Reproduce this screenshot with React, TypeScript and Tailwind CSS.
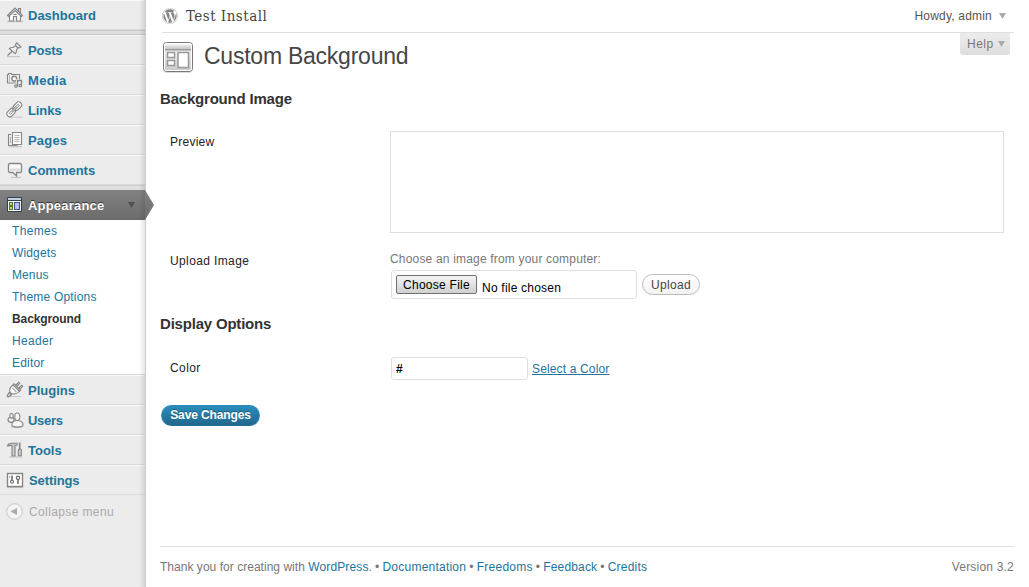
import type { ReactNode } from 'react';
import { FaWordpress } from 'react-icons/fa';

const stroke = { fill: 'none', stroke: '#858585', strokeWidth: 1.1 } as const;

function Icon({ children }: { children: ReactNode }) {
  return (
    <svg width="18" height="18" viewBox="0 0 18 18" className="shrink-0" {...stroke}>
      {children}
    </svg>
  );
}

const HomeIcon = () => (
  <Icon>
    <path d="M1 15.6h16" stroke="#c4c4c4" />
    <path d="M3.500 8.500V15h4v-4.500h3V15h4V8.500" fill="#f8f8f8" />
    <path d="M12.500 5V2.500h2V7" fill="#ddd" />
    <path d="M1.500 9.500 9 2l7.500 7.500-1 1L9 4.500l-6.500 6z" fill="#f3f3f3" />
    <path d="M7.500 8.500h3" />
  </Icon>
);

const PinIcon = () => (
  <Icon>
    <path d="M1 15.600h13" stroke="#c4c4c4" />
    <path d="M1.500 14.500 6 10.500" strokeWidth="1.400" />
    <path d="M3.300 7.500c1.500-1 2.700-1.200 4-1l2.400-2c-.3-1 0-2 .8-2.700l4.500 4c-.8.900-1.700 1-2.600.8l-2 2.400c.3 1.400 0 2.700-1 3.700z" fill="#f2f2f2" />
    <path d="M9.700 4.500c.4 1 1.300 1.900 2.700 2.100" />
  </Icon>
);

const MediaIcon = () => (
  <Icon>
    <path d="M1.500 3.500h1v-1h3v1h8v8.500h-12z" fill="#f4f4f4" />
    <path d="M3.500 4v7.500" stroke="#b5b5b5" />
    <circle cx="8.300" cy="7.700" r="2.400" fill="#fff" strokeWidth="1.400" />
    <path d="M8.500 16.500v-4H10V8.300h6.500V16.500z" fill="#ececec" stroke="none" />
    <path d="M11.500 15V9.500h4V14" strokeWidth="1.300" />
    <circle cx="10" cy="15" r="1.300" fill="#ccc" />
    <circle cx="14.300" cy="14.500" r="1.300" fill="#ccc" />
  </Icon>
);

const LinkIcon = () => (
  <Icon>
    <path d="M3 16.300h14" stroke="#cfcfcf" />
    <g transform="rotate(-45 5.300 11.300)">
      <rect x=".3" y="8.300" width="9.400" height="6" rx="3" fill="#fafafa" />
      <rect x="3" y="10.300" width="4" height="2" rx="1" fill="#ececec" strokeWidth=".9" />
    </g>
    <g transform="rotate(-45 11.300 5.300)">
      <rect x="6.800" y="2.300" width="9.400" height="6" rx="3" fill="#fafafa" />
      <rect x="9.500" y="4.300" width="4" height="2" rx="1" fill="#ececec" strokeWidth=".9" />
    </g>
    <path d="m6.500 10 4-4" strokeWidth="2.600" />
    <path d="m6.500 10 4-4" stroke="#f0f0f0" strokeWidth="1" />
  </Icon>
);

const PagesIcon = () => (
  <Icon>
    <path d="M3 15.800h13" stroke="#c4c4c4" />
    <path d="M5 3.500H2.500v11H11V13" fill="#eee" />
    <path d="M6.500 1.500h9v12h-9z" fill="#fafafa" />
    <path d="M8.500 4.500h5M8.500 6.500h5M8.500 8.500h5M8.500 10.500h5M4.500 6v6" stroke="#b5b5b5" />
  </Icon>
);

const CommentIcon = () => (
  <Icon>
    <path d="M5 16.500h10" stroke="#c4c4c4" />
    <path d="M4 2.500h10a1.500 1.500 0 0 1 1.500 1.500v6a1.500 1.500 0 0 1-1.500 1.500h-3.500V15L7 11.500H4A1.500 1.500 0 0 1 2.500 10V4A1.500 1.500 0 0 1 4 2.500z" fill="#fafafa" strokeWidth="1.300" />
    <path d="M4 7.500h10v2.500H4z" fill="#ddd" stroke="none" />
  </Icon>
);

const AppearanceIcon = () => (
  <Icon>
    <rect x="1.500" y="1.500" width="14" height="14" rx=".8" fill="#fff" stroke="#314153" />
    <path d="M2 3h13" stroke="#b4c8d7" strokeWidth="1.500" />
    <path d="M2 4.500h13" stroke="#314153" />
    <path d="M3.500 6.500h3v3h-3zM3.500 10.500h3v3h-3z" fill="#c5dd8c" stroke="#587a24" />
    <path d="M8.500 6.500h5v7h-5z" fill="#b9bff5" stroke="#4650a0" />
  </Icon>
);

const PlugIcon = () => (
  <Icon>
    <path d="M3 15.600h12" stroke="#cacaca" />
    <path d="M1 15 3 11.500l2.500 2.300L2 16z" fill="#ddd" />
    <path d="m9.500 4.500 3.200-3.200 1 1-3 3.200M12.500 7.500l3.200-3.200 1 1-3 3.200" fill="#fff" />
    <path d="M7.500 4c-3 1.500-4.500 4-3.500 7.300 2.500 2.700 7 2.200 9.500-1.300z" fill="#f6f6f6" />
    <path d="m7 3.800 1-1 6.500 6.400-1 1z" fill="#eee" />
    <path d="m6.500 7 4 4" stroke="#aaa" />
  </Icon>
);

const UsersIcon = () => (
  <Icon>
    <path d="M5 16.300h11" stroke="#cacaca" />
    <ellipse cx="5" cy="8.800" rx="3" ry="2.600" fill="#eee" />
    <ellipse cx="5.500" cy="4.800" rx="1.700" ry="2.300" fill="#fafafa" />
    <path d="M6.300 15c-1.200-3 1-5.500 5-5.500s6.700 2.500 5.400 5.500c-3 1.300-7.400 1.300-10.400 0z" fill="#f6f6f6" />
    <ellipse cx="11.300" cy="5.800" rx="2.500" ry="3.800" fill="#fafafa" />
  </Icon>
);

const ToolsIcon = () => (
  <Icon>
    <path d="M3 16h13" stroke="#c4c4c4" />
    <path d="M1.500 5c.5-2 2-2.800 4-2.800H11v2H9V15H6V4.500C4 4.200 3 4.500 1.500 5z" fill="#ccc" />
    <path d="M13.700 1.500V8" strokeWidth="1.600" />
    <path d="M12.300 9c0-1.300 3-1.300 3 0v5.800h-3z" fill="#ccc" />
  </Icon>
);

const SettingsIcon = () => (
  <Icon>
    <path d="M1 16.500h16" stroke="#c4c4c4" />
    <rect x="1.500" y="2.500" width="15" height="13" fill="#fff" strokeWidth="1.400" />
    <path d="M6 4.500v5M12 8v5" stroke="#666" strokeWidth="1.500" />
    <circle cx="6" cy="10.800" r="1.500" stroke="#666" />
    <circle cx="12" cy="6.800" r="1.700" stroke="#666" />
    <path d="M3.800 5v2" stroke="#aaa" />
  </Icon>
);

function Item({ icon, label, tracking = '' }: { icon: ReactNode; label: string; tracking?: string }) {
  return (
    <div className="flex h-[30px] items-center border-t border-b border-t-[#f9f9f9] border-b-[#dadada] pl-1.5 text-[13px] leading-[18px] font-bold text-[#21759b]">
      {icon}
      <span className={'mt-0.5 ml-1 whitespace-nowrap ' + tracking}>{label}</span>
    </div>
  );
}

const subItems = [
  ['Themes', 'tracking-[0.35px]'],
  ['Widgets', 'tracking-[0.15px]'],
  ['Menus', 'tracking-[0.1px]'],
  ['Theme Options', 'tracking-[0.2px]'],
  ['Background', 'font-bold text-[#333] tracking-[-0.1px]'],
  ['Header', 'tracking-[0.35px]'],
  ['Editor', 'tracking-[0.2px]'],
];

function Arrow({ className }: { className: string }) {
  return (
    <svg width="7" height="6" viewBox="0 0 7 6" className={className}>
      <path d="M0 0h7L3.500 6z" fill="currentColor" />
    </svg>
  );
}

function Sidebar() {
  return (
    <nav className="relative flex h-full w-[146px] shrink-0 flex-col border-r border-[#ccc] bg-[#ececec]">
      <Item icon={<HomeIcon />} label="Dashboard" />
      <div className="h-[5px] border-t border-b border-[#c6c6c6] bg-[#dfdfdf]" />
      <Item icon={<PinIcon />} label="Posts" tracking="tracking-[-0.2px]" />
      <Item icon={<MediaIcon />} label="Media" tracking="tracking-[0.35px]" />
      <Item icon={<LinkIcon />} label="Links" tracking="tracking-[-0.1px]" />
      <Item icon={<PagesIcon />} label="Pages" tracking="tracking-[0.2px]" />
      <Item icon={<CommentIcon />} label="Comments" />
      <div className="h-[5px] border-t border-[#cfcfcf] bg-[#dfdfdf]" />
      <div className="flex h-[30px] items-center bg-linear-to-b from-[#828282] to-[#6b6b6b] pl-1.5 text-[13px] font-bold text-white [text-shadow:0_-1px_0_#333]">
        <AppearanceIcon />
        <span className="mt-0.5 ml-1 flex-1 tracking-[0.2px]">Appearance</span>
        <Arrow className="mr-2.5 text-[#505050]" />
      </div>
      <div className="bg-white">
        {subItems.map(([label, style]) => (
          <div key={label} className="h-[22px] pl-3 text-[12px] leading-[22px] whitespace-nowrap text-[#21759b]">
            <span className={style}>{label}</span>
          </div>
        ))}
      </div>
      <div className="h-px bg-[#dadada]" />
      <Item icon={<PlugIcon />} label="Plugins" />
      <Item icon={<UsersIcon />} label="Users" tracking="tracking-[-0.3px]" />
      <Item icon={<ToolsIcon />} label="Tools" />
      <Item icon={<SettingsIcon />} label="Settings" tracking="pl-px tracking-[-0.1px]" />
      <div className="mt-[7px] flex h-[18px] items-center pl-1.5 text-[12px] text-[#aaa]">
        <svg width="17" height="17" viewBox="0 0 17 17">
          <circle cx="8.500" cy="8.500" r="7.800" fill="#f4f4f4" stroke="#c6c6c6" />
          <path d="M4.500 8.500 11 5v7z" fill="#aaa" />
        </svg>
        <span className="mt-0.5 ml-1.5 tracking-[0.38px]">Collapse menu</span>
      </div>
      <div className="pointer-events-none absolute inset-y-0 right-0 w-[6px] bg-linear-to-r from-transparent to-black/10" />
      <svg width="10" height="30" viewBox="0 0 10 30" className="absolute top-[190px] left-[145px]">
        <defs>
          <linearGradient id="tip" x1="0" y1="0" x2="0" y2="1">
            <stop offset="0" stopColor="#828282" />
            <stop offset="1" stopColor="#6b6b6b" />
          </linearGradient>
        </defs>
        <path d="M0 0 9 15 0 30z" fill="url(#tip)" />
      </svg>
    </nav>
  );
}

function ThemeIcon() {
  return (
    <svg width="32" height="33" viewBox="0 0 32 33">
      <defs>
        <linearGradient id="frame" x1="0" y1="0" x2="0" y2="1">
          <stop offset="0" stopColor="#fff" />
          <stop offset="1" stopColor="#c8c8c8" />
        </linearGradient>
        <linearGradient id="bar" x1="0" y1="0" x2="0" y2="1">
          <stop offset="0" stopColor="#f0f0f0" />
          <stop offset="1" stopColor="#c4c4c4" />
        </linearGradient>
      </defs>
      <path d="M3 31.500h26" stroke="#ddd" />
      <rect x="1.500" y="1.500" width="29" height="29" rx="3" fill="url(#frame)" stroke="#777" />
      <rect x="2.500" y="2.500" width="27" height="27" rx="2" fill="none" stroke="#fff" />
      <path d="M3 3.500h26V8H3z" fill="url(#bar)" />
      <path d="M3 8h26v1.500H3z" fill="#999" />
      <path d="M5.500 11.500h7v5h-7zM5.500 19.500h7v5h-7zM16 11.500h10.500v15H16z" fill="#fff" stroke="#999" strokeWidth="1.500" />
    </svg>
  );
}

const links = [
  ['Documentation', 'tracking-[0.23px]'],
  ['Freedoms', 'tracking-[0.25px]'],
  ['Feedback', 'tracking-[0.15px]'],
  ['Credits', 'tracking-[0.2px]'],
];

export default function App() {
  return (
    <div className="flex h-[587px] w-[1029px] overflow-hidden bg-white font-['Liberation_Sans',sans-serif] text-[12px] leading-[18px] text-[#333]">
      <Sidebar />
      <main className="flex flex-1 flex-col pr-[15px] pl-[14px]">
        <header className="ml-0.5 flex h-[33px] items-center border-b border-[#dfdfdf]">
          <FaWordpress size={16} color="#858585" />
          <h1 className="ml-2 flex-1 font-['DejaVu_Serif_Condensed','DejaVu_Serif',serif] text-[15px] tracking-[0.48px] text-[#464646]">Test Install</h1>
          <span className="tracking-[0.2px] text-[#555]">Howdy, admin</span>
          <Arrow className="mr-2 ml-[7px] text-[#aaa]" />
        </header>
        <div className="flex h-[57px] items-start">
          <div className="mt-2 ml-0.5"><ThemeIcon /></div>
          <h2 className="mt-[9px] ml-2.5 flex-1 text-[23px] leading-[29px] tracking-[-0.24px] text-[#464646]">Custom Background</h2>
          <div className="mr-1 flex h-[22px] w-[50px] items-center rounded-b-[3px] bg-linear-to-b from-[#ececec] to-[#dedede] pl-[7px] text-[#777]">
            <span className="tracking-[0.5px]">Help</span>
            <Arrow className="ml-1 text-[#aaa]" />
          </div>
        </div>
        <h3 className="text-[15px] font-bold tracking-[-0.2px] text-[#333]">Background Image</h3>
        <section className="mt-[23px] flex h-[102px]">
          <div className="w-[230px] pt-0.5 pl-2.5 tracking-[0.25px] text-[#222]">Preview</div>
          <div className="mr-2.5 flex-1 border border-[#dfdfdf]" />
        </section>
        <section className="mt-[17px] flex h-[49px]">
          <div className="w-[230px] pt-0.5 pl-2.5 tracking-[0.38px] text-[#222]">Upload Image</div>
          <div>
            <div className="tracking-[0.18px] text-[#777]">Choose an image from your computer:</div>
            <div className="mt-0.5 ml-px flex items-center">
              <div className="flex h-[29px] w-[246px] rounded-[3px] border border-[#dfdfdf] pt-1 pl-1 text-black">
                <button className="h-[19px] w-[81px] rounded-[2px] border border-[#707070] bg-linear-to-b from-[#f4f4f4] to-[#d0d0d0] pt-px text-[12px] leading-[17px] tracking-[0.25px] whitespace-nowrap">Choose File</button>
                <span className="mt-1 ml-[5px] tracking-[0.22px]">No file chosen</span>
              </div>
              <button className="ml-[5px] h-[21px] w-[58px] rounded-full border border-[#bbb] bg-linear-to-b from-white to-[#f2f2f2] pt-px text-[12px] leading-[18px] tracking-[0.35px] text-[#464646]">Upload</button>
            </div>
          </div>
        </section>
        <h3 className="mt-[16px] text-[15px] font-bold tracking-[-0.2px] text-[#333]">Display Options</h3>
        <section className="mt-6 flex h-[23px]">
          <div className="w-[230px] pt-0.5 pl-2.5 tracking-[0.4px] text-[#222]">Color</div>
          <div className="ml-px h-[23px] w-[137px] rounded-[3px] border border-[#dfdfdf] pl-1 leading-[22px] font-bold text-black">#</div>
          <a className="mt-[3px] ml-1 tracking-[0.15px] text-[#21759b] underline">Select a Color</a>
        </section>
        <button className="mt-[25px] ml-px h-[21px] w-[99px] rounded-full border border-[#298cba] border-b-[#1f6f95] bg-linear-to-b from-[#2a8dbc] to-[#20688d] text-[12px] leading-[19px] font-bold tracking-[-0.12px] whitespace-nowrap text-white [text-shadow:0_-1px_0_rgba(0,0,0,0.3)]">Save Changes</button>
        <footer className="mt-auto flex h-[41px] border-t border-[#dfdfdf] pt-[11px] whitespace-nowrap text-[#777]">
          <span className="tracking-[0.03px]">Thank you for creating with <a className="tracking-[0.13px] text-[#21759b]">WordPress</a>.</span>
          {links.map(([label, tracking]) => (
            <span key={label} className="ml-[3px]">• <a className={'text-[#21759b] ' + tracking}>{label}</a></span>
          ))}
          <span className="ml-auto tracking-[0.2px]">Version 3.2</span>
        </footer>
      </main>
    </div>
  );
}
